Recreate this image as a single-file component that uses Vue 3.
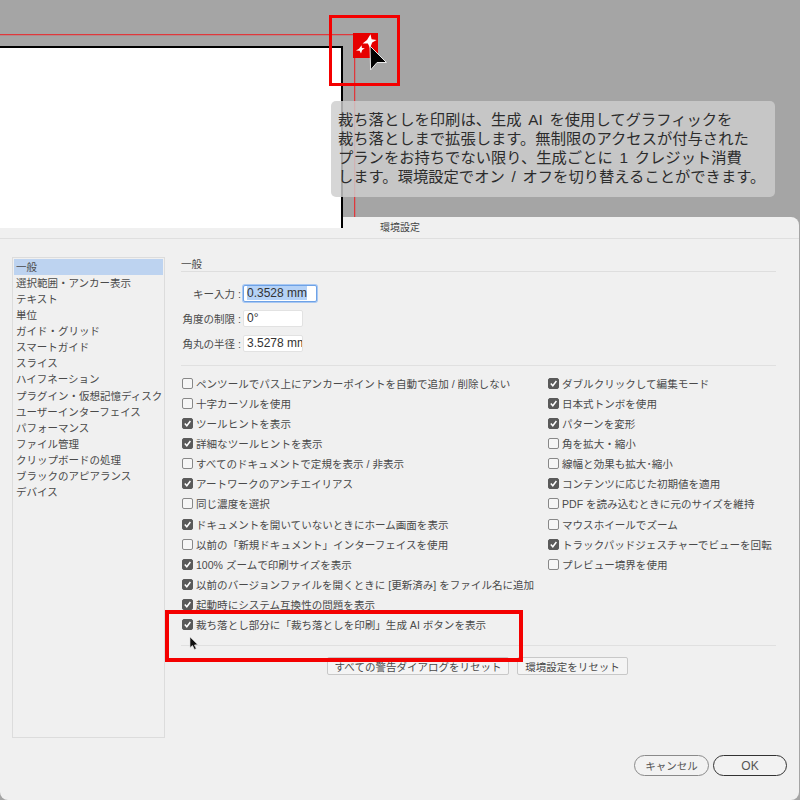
<script setup>
const categories = ['一般','選択範囲・アンカー表示','テキスト','単位','ガイド・グリッド','スマートガイド','スライス','ハイフネーション','プラグイン・仮想記憶ディスク','ユーザーインターフェイス','パフォーマンス','ファイル管理','クリップボードの処理','ブラックのアピアランス','デバイス']
const fields = [
  { label: 'キー入力 :', value: '0.3528 mm', active: true },
  { label: '角度の制限 :', value: '0°' },
  { label: '角丸の半径 :', value: '3.5278 mm' }
]
const left = [
  ['ペンツールでパス上にアンカーポイントを自動で追加 / 削除しない', false],
  ['十字カーソルを使用', false],
  ['ツールヒントを表示', true],
  ['詳細なツールヒントを表示', true],
  ['すべてのドキュメントで定規を表示 / 非表示', false],
  ['アートワークのアンチエイリアス', true],
  ['同じ濃度を選択', false],
  ['ドキュメントを開いていないときにホーム画面を表示', true],
  ['以前の「新規ドキュメント」インターフェイスを使用', false],
  ['100% ズームで印刷サイズを表示', true],
  ['以前のバージョンファイルを開くときに [更新済み] をファイル名に追加', true],
  ['起動時にシステム互換性の問題を表示', true],
  ['裁ち落とし部分に「裁ち落としを印刷」生成 AI ボタンを表示', true]
]
const right = [
  ['ダブルクリックして編集モード', true],
  ['日本式トンボを使用', true],
  ['パターンを変形', true],
  ['角を拡大・縮小', false],
  ['線幅と効果も拡大･縮小', false],
  ['コンテンツに応じた初期値を適用', true],
  ['PDF を読み込むときに元のサイズを維持', false],
  ['マウスホイールでズーム', false],
  ['トラックパッドジェスチャーでビューを回転', true],
  ['プレビュー境界を使用', false]
]
</script>

<template>
  <div class="page">
    <div class="canvas">
      <div class="artboard"></div>
      <div class="guide-h"></div>
      <div class="guide-v"></div>
      <div class="gen-btn">
        <svg width="25" height="25" viewBox="0 0 25 25">
          <path d="M17.5 1.2 L18.6 6.2 L23.6 7 L19.2 9.4 L17 15 L14.9 10.6 L9.6 10.4 L14 7 Z" fill="#fff" />
          <path d="M8.6 12.2 L8.9 15 L11.8 15.2 L9.2 17 L8 20.6 L6.6 17.8 L3 17.6 L6 15.8 Z" fill="#fff" />
        </svg>
      </div>
      <svg class="big-cursor" width="22" height="28" viewBox="0 0 22 28">
        <path d="M3 1 L19.5 17.5 L10 17.5 L3.6 25 Z" fill="#000" stroke="#e8e8e8" stroke-width="1" />
      </svg>
      <div class="callout"></div>
      <div class="tip">
        <div>裁ち落としを印刷は、生成 AI を使用してグラフィックを</div>
        <div>裁ち落としまで拡張します。無制限のアクセスが付与された</div>
        <div>プランをお持ちでない限り、生成ごとに 1 クレジット消費</div>
        <div>します。環境設定でオン / オフを切り替えることができます。</div>
      </div>
    </div>

    <div class="dialog">
      <div class="titlebar">環境設定</div>
      <div class="body">
        <ul class="sidebar">
          <li v-for="(c, i) in categories" :key="c" :class="{ selected: i === 0 }">{{ c }}</li>
        </ul>
        <div class="main">
          <div class="section">一般</div>
          <div class="fields">
            <div v-for="f in fields" :key="f.label" class="field">
              <span class="field-label">{{ f.label }}</span>
              <span class="input" :class="{ active: f.active }"><span class="val">{{ f.value }}</span></span>
            </div>
          </div>
          <div class="rule"></div>
          <div class="options">
            <div class="col col-left">
              <div v-for="o in left" :key="o[0]" class="opt">
                <span class="box" :class="{ on: o[1] }">
                  <svg v-if="o[1]" width="9" height="9" viewBox="0 0 9 9"><path d="M1.8 4.6 L3.8 6.8 L7.4 2" fill="none" stroke="#fff" stroke-width="1.5" /></svg>
                </span>
                <span>{{ o[0] }}</span>
              </div>
            </div>
            <div class="col">
              <div v-for="o in right" :key="o[0]" class="opt">
                <span class="box" :class="{ on: o[1] }">
                  <svg v-if="o[1]" width="9" height="9" viewBox="0 0 9 9"><path d="M1.8 4.6 L3.8 6.8 L7.4 2" fill="none" stroke="#fff" stroke-width="1.5" /></svg>
                </span>
                <span>{{ o[0] }}</span>
              </div>
            </div>
          </div>
          <div class="rule rule-low"></div>
          <div class="resets">
            <button class="rect-btn wide">すべての警告ダイアログをリセット</button>
            <button class="rect-btn">環境設定をリセット</button>
          </div>
          <div class="footer">
            <button class="pill cancel">キャンセル</button>
            <button class="pill ok">OK</button>
          </div>
        </div>
      </div>
    </div>

    <div class="highlight"></div>
    <svg class="small-cursor" width="11" height="15" viewBox="0 0 11 15">
      <path d="M1 1 L1 11.5 L3.5 9.5 L5.5 13.5 L7.2 12.6 L5.4 9 L8.6 8.6 Z" fill="#111" stroke="#ddd" stroke-width=".6" />
    </svg>
  </div>
</template>

<style>
html, body { margin: 0; background: #a5a5a5; }
</style>

<style scoped>
.page {
  position: relative;
  width: 800px;
  height: 800px;
  overflow: hidden;
  background: #a5a5a5;
  font-family: "Liberation Sans", "Noto Sans CJK JP", sans-serif;
  color: #4a4a4a;
}
.canvas { position: relative; height: 217px; }
.artboard {
  position: absolute;
  left: -2px; top: 46px;
  width: 343px; height: 180px;
  background: #fff;
  border: 1px solid #000;
  border-width: 2px 2px 0 0;
  box-sizing: content-box;
}
.guide-h { position: absolute; left: 0; top: 34px; width: 354px; height: 1px; background: #e0383c; box-shadow: 0 1px 0 rgba(224, 56, 60, .25); }
.guide-v { position: absolute; left: 354px; top: 34px; width: 1px; height: 183px; background: #e0383c; box-shadow: 1px 0 0 rgba(224, 56, 60, .25); }
.gen-btn { position: absolute; left: 353px; top: 33px; width: 25px; height: 25px; background: #e60000; }
.gen-btn svg { display: block; }
.big-cursor { position: absolute; left: 367px; top: 45px; }
.callout {
  position: absolute;
  left: 329px; top: 15px;
  width: 71px; height: 71px;
  box-sizing: border-box;
  border: 3.5px solid #f40000;
}
.tip {
  position: absolute;
  left: 331px; top: 101px;
  width: 444px; height: 96px;
  box-sizing: border-box;
  padding: 10px 0 0 7px;
  border-radius: 5px;
  background: rgba(205, 205, 205, 0.82);
  color: #2c2c2c;
  font-size: 15.3px;
  word-spacing: 2.5px;
  line-height: 18.9px;
  white-space: nowrap;
}
.dialog {
  height: 583px;
  background: #f0f0f0;
  border-radius: 8px;
  margin-right: 1px;
  display: flex;
  flex-direction: column;
}
.titlebar {
  height: 22px;
  line-height: 22px;
  text-align: center;
  font-size: 10px;
  color: #444;
  border-bottom: 1px solid #dfdfdf;
  box-sizing: border-box;
  padding-left: 1px;
}
.body {
  flex: 1;
  display: flex;
  padding: 18px 0 24px 12px;
  min-height: 0;
}
.sidebar {
  list-style: none;
  margin: 0;
  padding: 1px;
  width: 153px;
  height: 481px;
  box-sizing: border-box;
  border: 1px solid #dcdcdc;
  background: #f0f0f0;
  font-size: 10.5px;
  flex: none;
}
.sidebar li {
  height: 16.07px;
  line-height: 17px;
  padding-left: 2px;
  white-space: nowrap;
}
.sidebar li.selected { background: #bdd3f0; line-height: 16px; }
.main {
  margin-left: 16px;
  width: 595px;
  display: flex;
  flex-direction: column;
  font-size: 10.55px;
}
.section {
  height: 15px;
  line-height: 14px;
  border-bottom: 1px solid #dedede;
  box-sizing: border-box;
}
.fields { display: flex; flex-direction: column; gap: 8px; margin-top: 13px; }
.field { display: flex; align-items: center; height: 17px; }
.field-label { width: 62px; box-sizing: border-box; padding-right: 2px; text-align: right; white-space: nowrap; }
.input {
  display: block;
  width: 60px; height: 17px;
  box-sizing: border-box;
  background: #fff;
  border: 1px solid #e2e2e2;
  border-radius: 2px;
  font-size: 12px;
  line-height: 15px;
  padding-left: 3px;
  color: #333;
  overflow: hidden;
  white-space: nowrap;
}
.input.active {
  width: 74px;
  border: 1px solid #6ea2e6;
  box-shadow: 0 0 0 1px #a9c8f2;
}
.input.active .val { background: #b5d2f7; }
.rule { height: 1px; background: #e0e0e0; margin-top: 13px; flex: none; }
.options { display: flex; margin-top: 7px; height: 262px; }
.col { display: flex; flex-direction: column; }
.col-left { width: 366px; }
.opt {
  height: 20.15px;
  display: flex;
  align-items: center;
  gap: 3px;
  white-space: nowrap;
  padding-left: 1px;
}
.box {
  width: 9px; height: 9px;
  flex: none;
  border: 1px solid #888;
  border-radius: 2px;
  background: #f6f6f6;
  display: flex;
}
.box.on { background: #5a5a5a; border-color: #5a5a5a; }
.rule-low { margin-top: 10px; }
.resets { display: flex; gap: 8px; margin-top: 11px; padding-left: 146px; }
.rect-btn {
  height: 18px;
  width: 111px;
  padding: 0;
  font: inherit;
  font-size: 10.5px;
  color: #4a4a4a;
  background: #f4f4f4;
  border: 1px solid #c8c8c8;
  border-radius: 2px;
  white-space: nowrap;
}
.rect-btn.wide { width: 182px; }
.footer {
  margin-top: auto;
  margin-right: -11px;
  display: flex;
  justify-content: flex-end;
  gap: 4px;
}
.pill {
  height: 21px;
  padding: 0;
  font: inherit;
  font-size: 10.5px;
  color: #555;
  background: #f2f2f2;
  border-radius: 10.5px;
}
.cancel { width: 75px; border: 1.5px solid #8a8a8a; }
.ok { width: 74px; border: 1.5px solid #333; font-size: 12px; }
.highlight {
  position: absolute;
  left: 165px; top: 610px;
  width: 358px; height: 52px;
  box-sizing: border-box;
  border: 4px solid #f40000;
}
.small-cursor { position: absolute; left: 189px; top: 636px; }
</style>
